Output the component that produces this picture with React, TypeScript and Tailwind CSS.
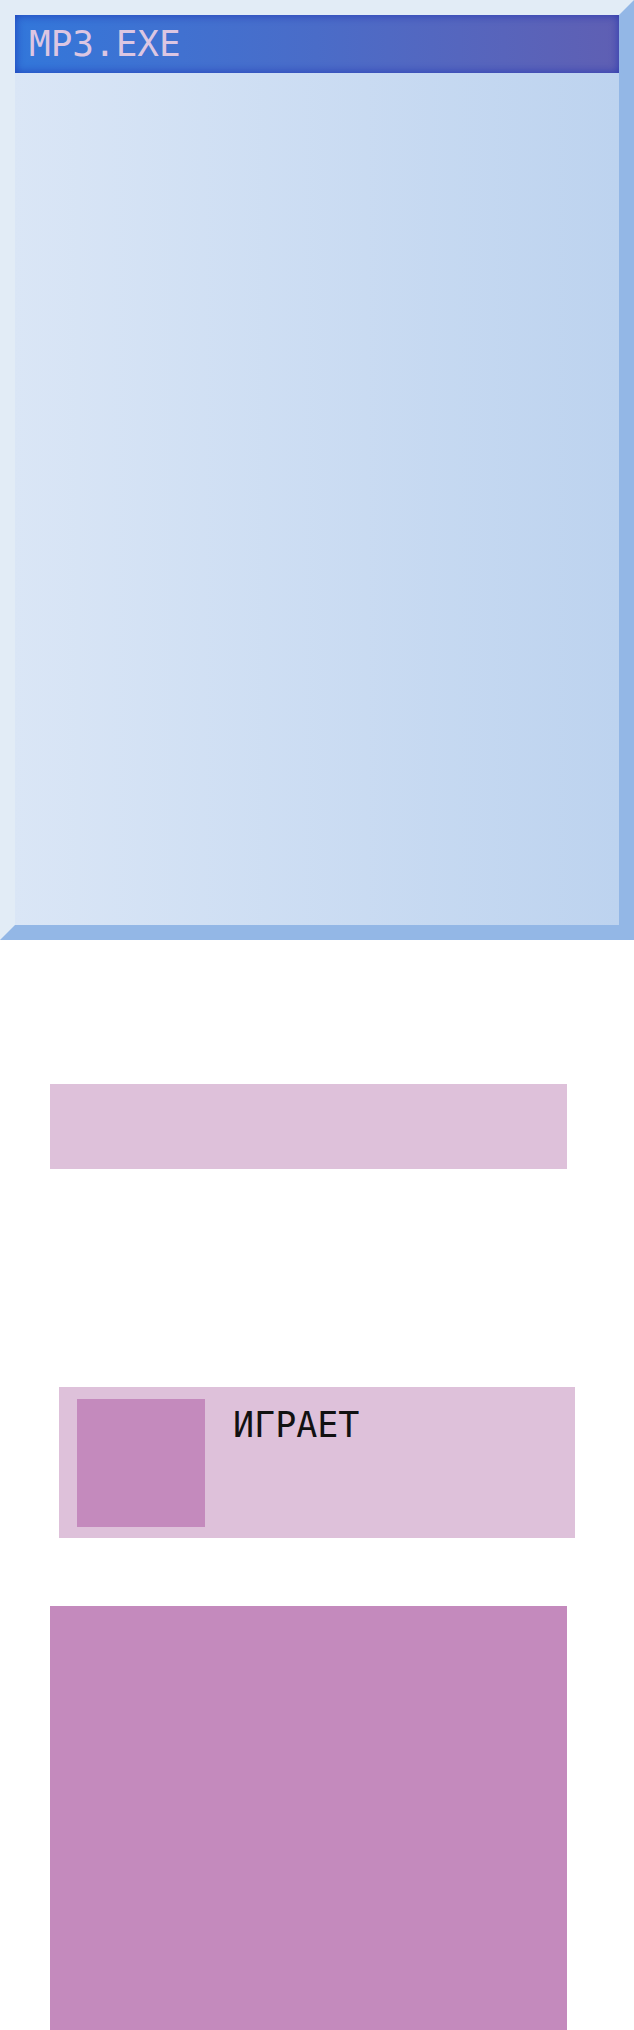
import React from "react"

const mono = { fontFamily: '"DejaVu Sans Mono", "Liberation Mono", monospace' }

export default function App() {
  return (
    <div className="min-h-screen bg-white overflow-hidden">
      {/* окно плеера */}
      <div className="w-full h-[940px] flex flex-col border-[15px] border-t-[#e2ecf6] border-l-[#e2ecf6] border-r-[#93b7e6] border-b-[#93b7e6] bg-gradient-to-r from-[#dae6f6] to-[#bdd3ef]">
        <div className="h-[58px] flex items-center px-[14px] bg-gradient-to-r from-[#3277da] via-[#4a6cc8] to-[#5f5fb3] shadow-[inset_0_0_10px_rgba(25,45,175,0.75)]">
          <span className="text-[36px] leading-none text-[#dcc6e2]" style={mono}>
            MP3.EXE
          </span>
        </div>
        <div className="flex-1" />
      </div>

      <div className="mt-[144px] ml-[50px] w-[517px] h-[85px] bg-[#dec1da]" />

      <div className="mt-[218px] ml-[59px] w-[516px] h-[151px] bg-[#dec1da] flex items-start pl-[18px] pt-[12px] gap-[28px]">
        <div className="w-[128px] h-[128px] bg-[#c48abd] shrink-0" />
        <div className="mt-[9px] text-[35px] leading-none text-[#111111]" style={mono}>
          ИГРАЕТ
        </div>
      </div>

      <div className="mt-[68px] ml-[50px] w-[517px] h-[517px] bg-[#c48abd]" />
    </div>
  )
}
